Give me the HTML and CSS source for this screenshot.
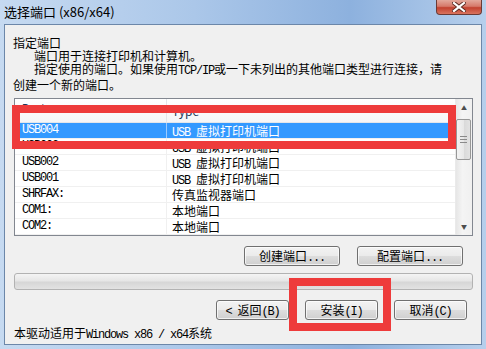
FILE: index.html
```html
<!DOCTYPE html>
<html lang="zh-CN">
<head>
    <meta charset="UTF-8">
    <title>选择端口 (x86/x64)</title>
    <link rel="stylesheet" href="styles.css">
</head>
<body>
    <div class="window">
        <div class="titlebar">
            <span class="title">选择端口 (x86/x64)</span>
            <div class="close-button">
                <svg width="14" height="10" viewBox="0 0 14 10">
                    <path d="M2 1 L12 9 M12 1 L2 9" stroke="#5a2a22" stroke-width="4" stroke-linecap="square"/>
                    <path d="M2 1 L12 9 M12 1 L2 9" stroke="#fff" stroke-width="2.2" stroke-linecap="square"/>
                </svg>
            </div>
        </div>

        <div class="client">
            <div class="intro">
                <p>指定端口</p>
                <p class="indent">端口用于连接打印机和计算机。</p>
                <p class="indent">指定使用的端口。如果使用<span class="en">TCP/IP</span>或一下未列出的其他端口类型进行连接，请<br>创建一个新的端口。</p>
            </div>

            <div class="listview">
                <div class="list-body">
                    <div class="row header">
                        <div class="cell port">Port</div>
                        <div class="cell type">Type</div>
                    </div>
                    <div class="row selected">
                        <div class="cell port">USB004</div>
                        <div class="cell type"><span class="en">USB </span>虚拟打印机端口</div>
                    </div>
                    <div class="row">
                        <div class="cell port">USB003</div>
                        <div class="cell type"><span class="en">USB </span>虚拟打印机端口</div>
                    </div>
                    <div class="row">
                        <div class="cell port">USB002</div>
                        <div class="cell type"><span class="en">USB </span>虚拟打印机端口</div>
                    </div>
                    <div class="row">
                        <div class="cell port">USB001</div>
                        <div class="cell type"><span class="en">USB </span>虚拟打印机端口</div>
                    </div>
                    <div class="row">
                        <div class="cell port">SHRFAX:</div>
                        <div class="cell type">传真监视器端口</div>
                    </div>
                    <div class="row">
                        <div class="cell port">COM1:</div>
                        <div class="cell type">本地端口</div>
                    </div>
                    <div class="row">
                        <div class="cell port">COM2:</div>
                        <div class="cell type">本地端口</div>
                    </div>
                </div>
                <div class="scrollbar">
                    <div class="sb-arrow">&#9650;</div>
                    <div class="sb-thumb"><span class="grip"></span></div>
                    <div class="sb-track"></div>
                    <div class="sb-arrow">&#9660;</div>
                </div>
            </div>

            <div class="list-actions">
                <button class="btn btn-create">创建端口<span class="en">...</span></button>
                <button class="btn btn-config">配置端口<span class="en">...</span></button>
            </div>

            <div class="progress"></div>

            <div class="nav-buttons">
                <button class="btn"><span class="en">&lt; </span>返回<span class="en">(B)</span></button>
                <button class="btn">安装<span class="en">(I)</span></button>
                <button class="btn">取消<span class="en">(C)</span></button>
            </div>

            <p class="footer">本驱动适用于<span class="en">Windows x86 / x64</span>系统</p>

            <!-- annotation boxes drawn over the dialog -->
            <div class="mark mark-list"></div>
            <div class="mark mark-install"></div>
        </div>
    </div>
</body>
</html>
```

FILE: styles.css
```css
* {
    box-sizing: border-box;
}

body {
    margin: 0;
    width: 486px;
    height: 349px;
    overflow: hidden;
    font-family: "Noto Sans CJK SC", sans-serif;
    font-size: 12px;
    color: #000;
}

p {
    margin: 0;
}

.en {
    font-family: "Liberation Mono", monospace;
    letter-spacing: -1.2px;
}

.window {
    height: 349px;
    padding: 0 4px 4px;
    display: flex;
    flex-direction: column;
    background: linear-gradient(to right, #c6daf1 0%, #abc7e9 40%, #8db1de 72%, #b6cfec 100%);
}

.titlebar {
    height: 24px;
    display: flex;
    justify-content: space-between;
    align-items: flex-start;
}

.title {
    padding-top: 3px;
    font-size: 13px;
    line-height: 17px;
    color: #000;
}

.close-button {
    width: 46px;
    height: 15px;
    display: flex;
    justify-content: center;
    align-items: center;
    border: 1px solid #6b3a35;
    border-top: none;
    border-radius: 0 0 4px 4px;
    background: linear-gradient(#e3a89c 0%, #d6796a 45%, #c2412f 55%, #d9745f 100%);
}

.client {
    flex: 1;
    position: relative;
    background: #f0f0f0;
    border: 1px solid #6c87a9;
}

.intro {
    padding: 11px 8px 0;
    line-height: 13px;
}

.indent {
    text-indent: 21px;
}

.listview {
    margin: 7px 8px 0 9px;
    height: 138px;
    display: flex;
    background: #fff;
    border: 1px solid #828790;
}

.list-body {
    flex: 1;
    overflow: hidden;
}

.row {
    display: flex;
    height: 16px;
    line-height: 15px;
    border-bottom: 1px solid #f0f0f0;
}

.cell {
    white-space: nowrap;
}

.cell.port {
    width: 152px;
    padding-left: 7px;
    border-right: 1px solid #f0f0f0;
    font-family: "Liberation Mono", monospace;
    letter-spacing: -1.2px;
}

.cell.type {
    flex: 1;
    padding-left: 5px;
}

.row.header {
    height: 24px;
    line-height: 23px;
    background: linear-gradient(#ffffff, #f5f6f7);
    border-bottom: 1px solid #e3e6ea;
    color: #1e395b;
}

.row.header .cell.port {
    border-right: 1px solid #e3e6ea;
}

.row.selected {
    background: #3399ff;
    color: #fff;
}

.row.selected .cell.port {
    border-right-color: #9ccbff;
}

.scrollbar {
    width: 17px;
    display: flex;
    flex-direction: column;
    background: linear-gradient(to right, #e6e6e6, #f4f4f4 40%, #f0f0f0);
    border-left: 1px solid #eaeaea;
}

.sb-arrow {
    height: 17px;
    font-size: 6px;
    line-height: 17px;
    text-align: center;
    color: #4d4d4d;
}

.sb-thumb {
    height: 41px;
    margin: 3px 1px 0 0;
    display: flex;
    justify-content: center;
    align-items: center;
    border: 1px solid #979797;
    border-radius: 2px;
    background: linear-gradient(to right, #f3f3f3, #e8e8e8 50%, #d9d9d9 51%, #e2e2e2);
}

.grip {
    width: 7px;
    height: 7px;
    border-top: 1px solid #8a8a8a;
    border-bottom: 1px solid #8a8a8a;
    background: linear-gradient(transparent 2px, #8a8a8a 2px, #8a8a8a 3px, transparent 3px);
}

.sb-track {
    flex: 1;
}

.btn {
    height: 20px;
    padding: 0;
    font: inherit;
    line-height: 17px;
    color: #000;
    border: 1px solid #707070;
    border-radius: 3px;
    background: linear-gradient(#f3f3f3 0%, #ebebeb 48%, #dddddd 52%, #cfcfcf 100%);
    box-shadow: inset 0 0 0 1px rgba(255, 255, 255, 0.7);
}

.list-actions {
    display: flex;
    justify-content: flex-end;
    gap: 17px;
    margin: 10px 18px 0 0;
}

.btn-create {
    width: 96px;
}

.btn-config {
    width: 106px;
}

.progress {
    height: 17px;
    margin: 7px 8px 0 9px;
    border: 1px solid #b2b2b2;
    border-radius: 3px;
    background: linear-gradient(#f4f4f4 0%, #e6e6e6 45%, #d6d6d6 55%, #e2e2e2 100%);
}

.nav-buttons {
    display: flex;
    justify-content: flex-end;
    gap: 16px;
    margin: 10px 14px 0 0;
}

.nav-buttons .btn {
    width: 73px;
}

.footer {
    margin: 6px 0 0 9px;
    line-height: 13px;
}

.mark {
    position: absolute;
    border: 8px solid #ee3b3b;
}

.mark-list {
    left: 7px;
    top: 80px;
    width: 444px;
    height: 44px;
}

.mark-install {
    left: 284px;
    top: 253px;
    width: 102px;
    height: 53px;
}
```
